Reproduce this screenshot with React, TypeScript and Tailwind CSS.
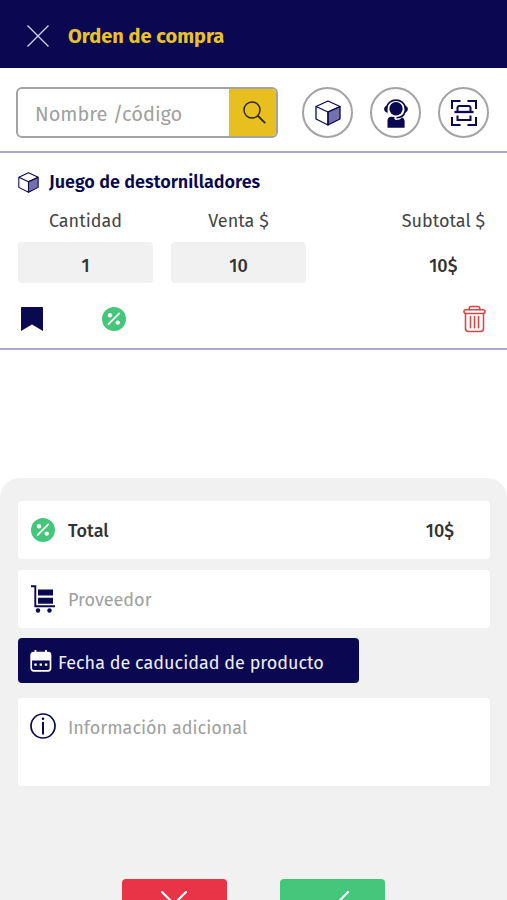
import { useState } from 'react'

const NAVY = "#090850"

const CubeIcon = ({className}:any)=>(
    <svg className={className} viewBox="0 0 26 26" fill="none" stroke={NAVY} strokeWidth="1.3" strokeLinejoin="round" aria-hidden="true">
        <path d="M13 12 25 6.5V19L13 25Z" fill="#7470ae" />
        <path d="M1 6.5 13 1l12 5.5L13 12Z" />
        <path d="M1 6.5V19l12 6V12" />
    </svg>
)

const AgentIcon = ({className}:any)=>(
    <svg className={className} viewBox="0 0 26 30" fill="none" aria-hidden="true">
        <circle cx="13" cy="10.8" r="6.7" fill={NAVY} />
        <path d="M3.700 9.500a9.400 8.700 0 0 1 18.600 0" stroke={NAVY} strokeWidth="1.7" />
        <path d="M4.600 7.200C2.400 7.800 1.100 9.300 1.100 11.100s1.300 3.300 3.500 3.900ZM21.400 7.200c2.200.6 3.500 2.100 3.500 3.900s-1.300 3.300-3.500 3.900Z" fill={NAVY} />
        <path d="M22 13.500c-.8 4-3.600 6-8.500 6.300" stroke={NAVY} strokeWidth="1.6" />
        <path d="M4.500 29.700v-7.200c0-2.200 1.600-3.700 3.800-3.700l3.200.1c-.6 1.900.4 3 1.900 3 2.400 0 4.300-.8 5.700-2.500 1.700.7 2.500 1.900 2.500 3.700v6.600Z" fill={NAVY} />
    </svg>
)

const ScanIcon = ({className}:any)=>(
    <svg className={className} viewBox="0 0 28 28" fill="none" stroke={NAVY} strokeWidth="2" aria-hidden="true">
        <path d="M2 10V2h8.500M17.500 2H26v8M2 18v8h8.500M17.500 26H26v-8" />
        <path d="M7.500 12.500V9q0-2 2-2h9q2 0 2 2v3.500M7.500 16.500V21h13v-4.500" />
        <path d="M4.500 13h19" strokeWidth="2.300" />
    </svg>
)

const PercentIcon = ({className}:any)=>(
    <svg className={className} viewBox="0 0 24 24" aria-hidden="true">
        <circle cx="12" cy="12" r="12" fill="#45c77b" />
        <path d="M6.500 17.200 17.300 6.400" stroke="#fff" strokeWidth="1.800" strokeLinecap="round" />
        <circle cx="8" cy="8.200" r="2.200" fill="#fff" />
        <circle cx="15.700" cy="15.600" r="2.200" fill="#fff" />
    </svg>
)

const TrashIcon = ({className}:any)=>(
    <svg className={className} viewBox="0 0 24 28" fill="none" stroke="#dc4444" strokeWidth="1.600" strokeLinejoin="round" strokeLinecap="round" aria-hidden="true">
        <path d="M6.500 4.300V3.200Q6.500 1 8.700 1h6.600q2.200 0 2.200 2.200v1.100" />
        <rect x="1" y="4.300" width="22" height="3.900" rx="1.950" />
        <path d="M2.600 8.200V24q0 3 3 3h12.800q3 0 3-3V8.200M7.800 11.500v11.500M12 11.500v11.500M16.200 11.500v11.500" />
    </svg>
)

const TrolleyIcon = ({className}:any)=>(
    <svg className={className} viewBox="0 0 24 28" aria-hidden="true">
        <path d="M0 1.200h4.300V21.200H24" fill="none" stroke={NAVY} strokeWidth="1.900" />
        <path d="M7 4.500h15v6H7ZM7 12.800h15v6H7Z" fill={NAVY} />
        <circle cx="7" cy="25.500" r="2.200" fill={NAVY} />
        <circle cx="18.500" cy="25.500" r="2.200" fill={NAVY} />
    </svg>
)

const CalendarIcon = ({className}:any)=>(
    <svg className={className} viewBox="0 0 22 22" fill="none" stroke="#fff" aria-hidden="true">
        <rect x="1.200" y="2.500" width="19.300" height="18.300" rx="2.500" strokeWidth="1.700" />
        <path d="M.8 4.500q0-2.500 2.500-2.500h15.200q2.500 0 2.500 2.500V10.500H.8Z" fill="#fff" stroke="none" />
        <path d="M5.500 0v3M16 0v3" strokeWidth="1.800" />
        <path d="M4.300 14.600h2.400M9.600 14.600h2.400M14.900 14.600h2.400" strokeWidth="2.400" />
    </svg>
)

const RoundButton = ({label, children}:any)=>(
    <button aria-label={label} className="flex size-[51px] shrink-0 items-center justify-center rounded-full border-2 border-[#a3a3a3] bg-white">
        {children}
    </button>
)

const NumberField = ({id, label, value, onChange}:any)=>(
    <div className="flex w-[135px] flex-col gap-[9px]">
        <label htmlFor={id} className="text-center text-lg leading-6 text-[#444]">{label}</label>
        <input id={id} value={value} onChange={onChange} inputMode="numeric"
            className="h-[41px] w-full rounded-sm bg-[#f1f1f1] pt-1.5 text-center text-lg font-medium text-[#333] outline-none" />
    </div>
)

export default function App() {
    const [form, s__form] = useState({search:"", qty:"1", price:"10", provider:"", info:""})
    const handleChange = (e:any, subProp:string)=>{
        s__form({...form,...{[subProp]:e.currentTarget.value}})
    }
    const subtotal = (Number(form.qty) || 0) * (Number(form.price) || 0)

    return (
    <div className="flex h-screen flex-col overflow-hidden bg-white font-['Fira_Sans','Noto_Sans',sans-serif]">
        <header className="flex h-[68px] shrink-0 items-center gap-[19px] bg-[#090850] pt-1 pl-[27px]">
            <button aria-label="Cerrar">
                <svg className="size-[22px]" viewBox="0 0 22 22" stroke="#d5d5f2" strokeWidth="1.300" aria-hidden="true">
                    <path d="M.5.5l21 21M21.500.5l-21 21" />
                </svg>
            </button>
            <h1 className="text-xl font-bold text-[#e9c229]">Orden de compra</h1>
        </header>

        <div className="flex shrink-0 items-center justify-between border-b-2 border-[#aaa8c8] pt-[19px] pr-[18px] pb-[13px] pl-4">
            <form onSubmit={(e)=>e.preventDefault()} className="flex h-[51px] w-[262px] overflow-hidden rounded-md border-2 border-[#a3a3a3]">
                <input aria-label="Nombre /código" placeholder="Nombre /código" value={form.search} onChange={(e)=>handleChange(e,"search")}
                    className="min-w-0 flex-1 pt-0.5 pl-[17px] text-xl text-[#333] outline-none placeholder:text-[#a0a0a0]" />
                <button aria-label="Buscar" className="flex w-[47px] items-center justify-center bg-[#e7c01f] pl-1">
                    <svg className="size-[23px]" viewBox="0 0 23 23" fill="none" stroke="#2e2815" strokeWidth="1.500" aria-hidden="true">
                        <circle cx="9" cy="9" r="8" />
                        <path d="m14.700 14.700 7.500 7.500" strokeWidth="1.900" />
                    </svg>
                </button>
            </form>
            <div className="flex items-center gap-[17px]">
                <RoundButton label="Productos"><CubeIcon className="size-[26px]" /></RoundButton>
                <RoundButton label="Soporte"><AgentIcon className="h-[30px] w-[26px]" /></RoundButton>
                <RoundButton label="Escanear"><ScanIcon className="size-7" /></RoundButton>
            </div>
        </div>

        <section className="shrink-0 border-b-2 border-[#aaa8c8] px-[18px] pt-[17px] pb-[15px]">
            <div className="flex items-center gap-2.5">
                <CubeIcon className="size-[21px]" />
                <h2 className="text-lg leading-6 font-semibold text-[#090850]">Juego de destornilladores</h2>
            </div>
            <div className="mt-[15px] flex gap-[18px]">
                <NumberField id="qty" label="Cantidad" value={form.qty} onChange={(e:any)=>handleChange(e,"qty")} />
                <NumberField id="price" label="Venta $" value={form.price} onChange={(e:any)=>handleChange(e,"price")} />
                <div className="ml-auto flex flex-col gap-[9px] pr-1 text-center text-lg leading-6">
                    <span className="text-[#444]">Subtotal $</span>
                    <span className="pt-3 font-medium text-[#333]">{subtotal}$</span>
                </div>
            </div>
            <div className="mt-[22px] flex h-7 items-center px-[3px]">
                <button aria-label="Guardar">
                    <svg className="h-6 w-[22px]" viewBox="0 0 22 24" fill={NAVY} aria-hidden="true">
                        <path d="M1 0h20q1 0 1 1v23l-11-6.500L0 24V1q0-1 1-1Z" />
                    </svg>
                </button>
                <button aria-label="Descuento" className="ml-[59px]"><PercentIcon className="size-6" /></button>
                <button aria-label="Eliminar" className="ml-auto"><TrashIcon className="h-7 w-[23px]" /></button>
            </div>
        </section>

        <section className="mt-32 flex shrink-0 flex-col rounded-t-[20px] bg-[#f1f1f1] pt-[23px] pr-[17px] pb-6 pl-[18px]">
            <div className="flex h-[58px] items-center rounded-sm bg-white pr-9 pl-[13px] text-lg font-medium text-[#333]">
                <PercentIcon className="mr-[13px] size-6" />
                <span className="pt-0.5">Total</span>
                <span className="ml-auto pt-0.5">{subtotal}$</span>
            </div>
            <label className="mt-[11px] flex h-[58px] items-center gap-[13px] rounded-sm bg-white pl-[13px]">
                <TrolleyIcon className="h-7 w-6 shrink-0" />
                <input aria-label="Proveedor" placeholder="Proveedor" value={form.provider} onChange={(e)=>handleChange(e,"provider")}
                    className="min-w-0 flex-1 pt-0.5 text-lg text-[#333] outline-none placeholder:text-[#a0a0a0]" />
            </label>
            <button className="mt-2.5 flex h-[45px] w-[341px] items-center gap-1.5 rounded-sm bg-[#090850] pl-3 text-lg text-[#eeeefa]">
                <CalendarIcon className="size-[22px]" />
                <span className="pt-1">Fecha de caducidad de producto</span>
            </button>
            <label className="mt-[15px] flex h-[88px] gap-3 rounded-sm bg-white pt-[15px] pl-3">
                <svg className="size-[26px] shrink-0" viewBox="0 0 26 26" fill="none" stroke={NAVY} strokeWidth="1.700" aria-hidden="true">
                    <circle cx="13" cy="13" r="12" />
                    <path d="M13 9v12.500" strokeWidth="2" />
                    <circle cx="13" cy="5.800" r="1.300" fill={NAVY} stroke="none" />
                </svg>
                <textarea aria-label="Información adicional" placeholder="Información adicional" value={form.info} onChange={(e)=>handleChange(e,"info")}
                    className="min-w-0 flex-1 resize-none pt-[3px] text-lg leading-6 text-[#333] outline-none placeholder:text-[#a0a0a0]" />
            </label>
            <div className="mt-[93px] flex justify-center gap-[53px] pr-0.5">
                <button aria-label="Cancelar" className="flex h-[50px] w-[105px] items-center justify-center rounded-sm bg-[#e93448]">
                    <svg className="size-[26px]" viewBox="0 0 26 26" stroke="#fff" strokeWidth="2.200" strokeLinecap="round" aria-hidden="true">
                        <path d="m1 1 24 24M25 1 1 25" />
                    </svg>
                </button>
                <button aria-label="Confirmar" className="flex h-[50px] w-[105px] items-center justify-center rounded-sm bg-[#45c77b]">
                    <svg className="h-[26px] w-[34px]" viewBox="0 0 34 26" fill="none" stroke="#fff" strokeWidth="2.200" strokeLinecap="round" strokeLinejoin="round" aria-hidden="true">
                        <path d="M3 16 11 24 33 1" />
                    </svg>
                </button>
            </div>
        </section>
    </div>
    )
}
